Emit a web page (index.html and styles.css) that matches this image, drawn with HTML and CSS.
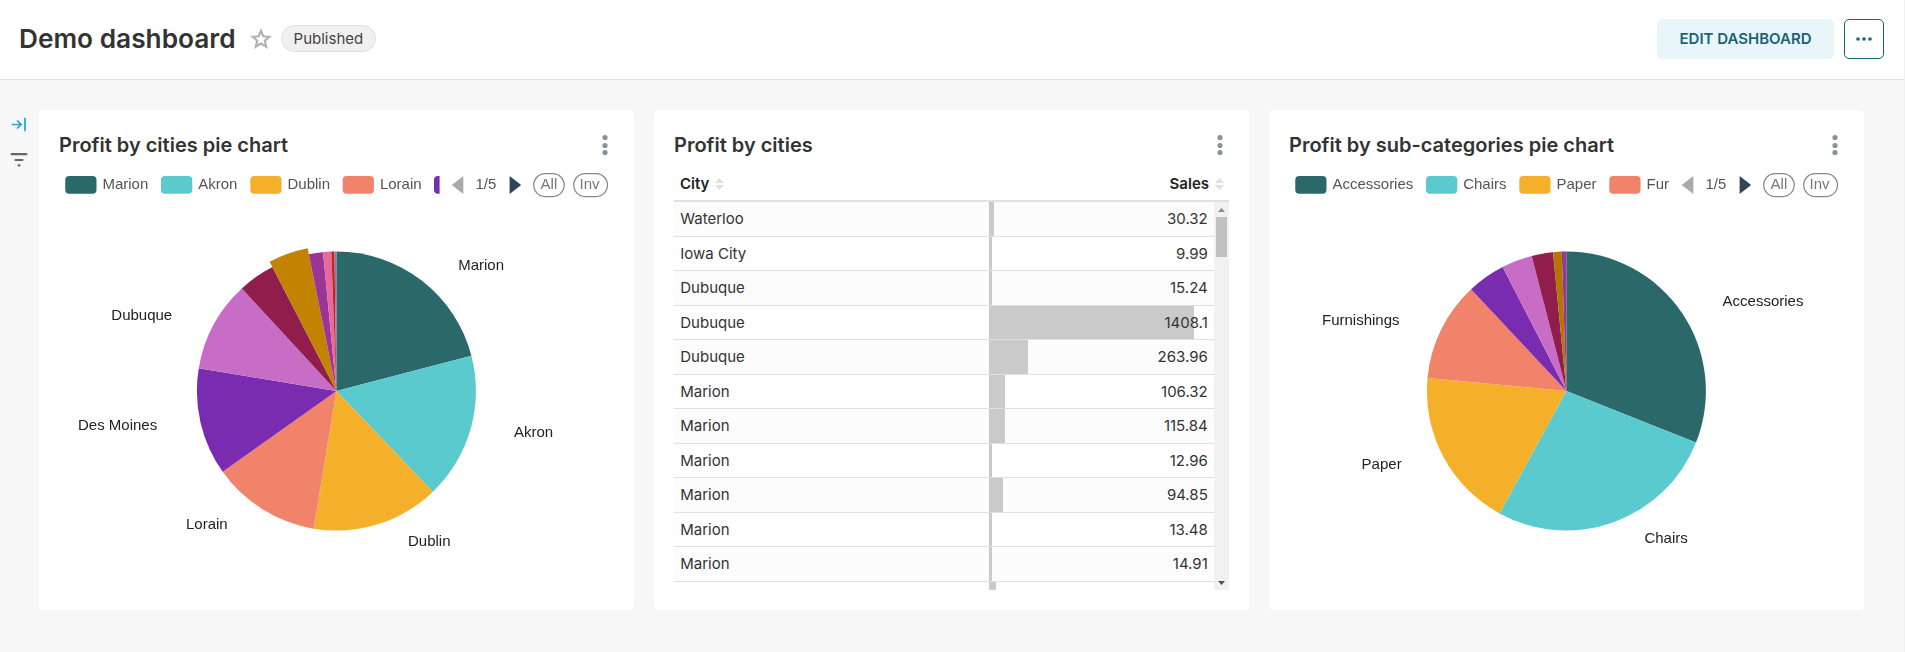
FILE: index.html
```html
<!DOCTYPE html>
<html lang="en">
<head>
<meta charset="utf-8">
<title>Demo dashboard</title>
<link rel="stylesheet" href="styles.css">
</head>
<body>
<header class="header">
  <h1 class="header-title">Demo dashboard</h1>
  <svg class="star" width="22" height="22" viewBox="0 0 22 22"><path d="M11 2.800 13.300 8.300l6 .5-4.500 3.900 1.400 5.900L11 15.500l-5.200 3.100L7.200 12.700 2.700 8.800 8.700 8.300z" fill="none" stroke="#b2b2b2" stroke-width="2.200"/></svg>
  <span class="status">Published</span>
  <div class="actions">
    <button class="btn-edit">EDIT DASHBOARD</button>
    <button class="btn-more" aria-label="More"><svg width="18" height="6" viewBox="0 0 18 6" fill="#1a6278"><circle cx="3" cy="3" r="1.800"/><circle cx="9" cy="3" r="1.800"/><circle cx="15" cy="3" r="1.800"/></svg></button>
  </div>
</header>
<main class="content">
  <aside class="rail">
    <svg width="16" height="15" viewBox="0 0 16 15" fill="none" stroke="#20a7c9" stroke-width="1.700"><path d="M.7 7.500H10M6 3.500l4.200 4L6 11.500M14 .800v13.400"/></svg>
    <svg width="18" height="16" viewBox="0 0 18 16" fill="none" stroke="#666" stroke-width="2.200" stroke-linecap="round"><path d="M1.600 2.200h14.800M5.500 8h7M8.500 13.300h1" /></svg>
  </aside>
  <section class="card">
    <div class="card-head"><h2 class="card-title">Profit by cities pie chart</h2><svg class="kebab" width="6" height="22" viewBox="0 0 6 22"><circle cx="3" cy="3.500" r="2.600"/><circle cx="3" cy="11.500" r="2.600"/><circle cx="3" cy="18.500" r="2.600"/></svg></div>
    <svg class="chart" id="cities" width="555" height="420" viewBox="0 0 555 420"></svg>
  </section>
  <section class="card">
    <div class="card-head"><h2 class="card-title">Profit by cities</h2><svg class="kebab" width="6" height="22" viewBox="0 0 6 22"><circle cx="3" cy="3.500" r="2.600"/><circle cx="3" cy="11.500" r="2.600"/><circle cx="3" cy="18.500" r="2.600"/></svg></div>
    <div class="table">
      <div class="thead">
        <span class="th">City <svg class="sort" width="9" height="12" viewBox="0 0 9 12"><path d="M0 5 4.500 0 9 5zM0 7h9L4.500 12z"/></svg></span>
        <span class="th">Sales <svg class="sort" width="9" height="12" viewBox="0 0 9 12"><path d="M0 5 4.500 0 9 5zM0 7h9L4.500 12z"/></svg></span>
      </div>
      <div class="tbody">
        <div class="rows" id="rows"></div>
        <div class="scrollbar">
          <svg width="7" height="4" viewBox="0 0 7 4"><path d="M0 4 3.500 0 7 4z" fill="#8b8b8b"/></svg>
          <div class="thumb"></div>
          <svg class="down" width="7" height="4" viewBox="0 0 7 4"><path d="M0 0h7L3.500 4z" fill="#505050"/></svg>
        </div>
      </div>
    </div>
  </section>
  <section class="card">
    <div class="card-head"><h2 class="card-title">Profit by sub-categories pie chart</h2><svg class="kebab" width="6" height="22" viewBox="0 0 6 22"><circle cx="3" cy="3.500" r="2.600"/><circle cx="3" cy="11.500" r="2.600"/><circle cx="3" cy="18.500" r="2.600"/></svg></div>
    <svg class="chart" id="subcategories" width="555" height="420" viewBox="0 0 555 420"></svg>
  </section>
</main>
<script src="main.js"></script>
</body>
</html>
```
FILE: styles.css
```css
* { box-sizing: border-box; }
body {
  margin: 0;
  height: 652px;
  overflow: hidden;
  background: #f7f7f7;
  border-right: 1px solid #f0f0f0;
  color: #333;
  font-family: Inter, "Liberation Sans", sans-serif;
  font-size: 15px;
}
.header {
  display: flex;
  align-items: center;
  height: 80px;
  padding: 0 20px 2px 19px;
  background: #fff;
  border-bottom: 1px solid #e0e0e0;
}
.header-title { margin: 0; font-size: 26.25px; font-weight: 600; line-height: 34px; }
.star { margin-left: 14px; }
.status {
  height: 27px;
  margin-left: 9px;
  padding: 0 12px;
  border: 1px solid #e0e0e0;
  border-radius: 14px;
  background: #f0f0f0;
  line-height: 26px;
  color: #444;
}
.actions { display: flex; gap: 10px; margin-left: auto; }
.btn-edit, .btn-more { height: 40px; padding: 0; border-radius: 5px; font: 600 15px Inter, sans-serif; color: #1a6278; }
.btn-edit { width: 177px; border: 0; background: #e9f6f9; }
.btn-more { display: flex; align-items: center; justify-content: center; width: 40px; border: 1px solid #1a6278; background: #fff; }
.content { display: flex; gap: 20px; padding-top: 30px; }
.rail { display: flex; flex-direction: column; align-items: center; gap: 20px; width: 19px; margin-left: 9px; padding-top: 7px; margin-right: -9px; }
.rail svg { flex: none; }
.card { width: 595px; height: 500px; padding: 20px; border-radius: 5px; background: #fff; flex: none; }
.card-head { display: flex; justify-content: space-between; height: 40px; padding: 3px 6.500px 0 0; }
.card-title { margin: 0; font-size: 20px; font-weight: 600; line-height: 25px; }
.kebab { margin-top: 1px; fill: #879399; }
.chart { display: block; font: 15px "Liberation Sans", Arial, sans-serif; will-change: transform; }
.legend-text { fill: #555; }
.pill-text { fill: #777; }
.pill { fill: #fff; stroke: #888; stroke-width: 1.250; }
.slice-label { fill: #222; }
.thead { display: flex; justify-content: space-between; height: 32px; padding: 0 5px 0 6px; border-bottom: 2px solid #e0e0e0; }
.th { display: flex; align-items: center; gap: 6px; height: 27px; font-weight: 600; color: #222; }
.sort { fill: #e0e0e0; }
.tbody { display: flex; height: 388px; overflow: hidden; }
.rows { width: 540px; }
.row { display: grid; grid-template-columns: 315px 225px; height: 34px; border-bottom: 1px solid #e0e0e0; line-height: 33px; }
.row:nth-child(odd) { height: 35px; background: #fcfcfc; }
.city { padding-left: 6.250px; }
.sales { padding-right: 6.250px; text-align: right; background: linear-gradient(#cacaca, #cacaca) no-repeat left / var(--bar) 100%; }
.scrollbar { display: flex; flex-direction: column; align-items: center; width: 15px; padding: 6px 0 5px; background: #f1f1f1; }
.thumb { width: 11px; height: 40px; margin-top: 5px; background: #c1c1c1; }
.down { margin-top: auto; }
```
FILE: main.js
```js
const CX = 277.4, CY = 221, R = 139.5;

const charts = {
  cities: {
    slices: [
      ['#2a686a', 75.4], ['#5acace', 136.2], ['#f4b02a', 189.4], ['#f0836a', 234.6],
      ['#792cb0', 279.35], ['#c86dc6', 317.3], ['#911d4c', 332.7], ['#c28300', 348.6, 145.5],
      ['#9a3495', 354.5], ['#e8689f', 357.9], ['#c4270f', 359.2], ['#8d74b8', 360]
    ],
    labels: [['Marion', 399.2, 100], ['Akron', 455, 267], ['Dublin', 349, 376],
      ['Lorain', 127, 359], ['Des Moines', 19, 260], ['Dubuque', 52.3, 150]],
    legend: [['Marion', 6.25, '#2a686a'], ['Akron', 102, '#5acace'], ['Dublin', 191.3, '#f4b02a'],
      ['Lorain', 283.7, '#f0836a'], ['', 375, '#792cb0']]
  },
  subcategories: {
    slices: [
      ['#2a686a', 111.7], ['#5acace', 208.65], ['#f4b02a', 275.35], ['#f0836a', 316.9],
      ['#792cb0', 332.8], ['#c86dc6', 345.6], ['#911d4c', 354.5], ['#b17700', 358.1], ['#9a3495', 360]
    ],
    labels: [['Accessories', 433.6, 136], ['Chairs', 355.4, 373], ['Paper', 72.6, 299], ['Furnishings', 33, 155]],
    legend: [['Accessories', 6.25, '#2a686a'], ['Chairs', 137, '#5acace'], ['Paper', 230.3, '#f4b02a'],
      ['Fur', 320.3, '#f0836a']]
  }
};

function point(deg, r) {
  const a = deg * Math.PI / 180;
  return (CX + r * Math.sin(a)).toFixed(2) + ' ' + (CY - r * Math.cos(a)).toFixed(2);
}

for (const id in charts) {
  const c = charts[id];
  let svg = `<clipPath id="${id}-clip"><rect width="380.600" height="40"/></clipPath><g clip-path="url(#${id}-clip)">`;
  for (const [name, x, color] of c.legend) {
    svg += `<rect x="${x}" y="6" width="31.250" height="17.800" rx="4" fill="${color}"/>`;
    if (name) svg += `<text class="legend-text" x="${x + 37.2}" y="19.400">${name}</text>`;
  }
  svg += '</g><path d="M404.300 6v18l-11.600-9z" fill="#aaa"/><path d="M450.600 6v18l11.600-9z" fill="#2f4554"/>' +
    '<text class="legend-text" x="416.500" y="19.400">1/5</text>' +
    '<rect class="pill" x="474.700" y="3.700" width="30.500" height="22.800" rx="11.400"/><text class="pill-text" x="481.600" y="19.400">All</text>' +
    '<rect class="pill" x="514.700" y="3.700" width="33.800" height="22.800" rx="11.400"/><text class="pill-text" x="520.600" y="19.400">Inv</text>';
  let start = 0;
  for (const [color, end, radius] of c.slices) {
    const r = radius || R;
    svg += `<path fill="${color}" d="M${CX} ${CY}L${point(start, r)}A${r} ${r} 0 0 1 ${point(end, r)}Z"/>`;
    start = end;
  }
  for (const [name, x, y] of c.labels) {
    svg += `<text class="slice-label" x="${x}" y="${y}">${name}</text>`;
  }
  document.getElementById(id).innerHTML = svg;
}

const rows = [
  ['Waterloo', '30.32', 5], ['Iowa City', '9.99', 3], ['Dubuque', '15.24', 3], ['Dubuque', '1408.1', 205],
  ['Dubuque', '263.96', 39], ['Marion', '106.32', 16], ['Marion', '115.84', 16], ['Marion', '12.96', 3],
  ['Marion', '94.85', 14], ['Marion', '13.48', 3], ['Marion', '14.91', 3], ['', '', 7]
];
document.getElementById('rows').innerHTML = rows.map(([city, sales, bar]) =>
  `<div class="row"><span class="city">${city}</span><span class="sales" style="--bar:${bar}px">${sales}</span></div>`
).join('');
```
